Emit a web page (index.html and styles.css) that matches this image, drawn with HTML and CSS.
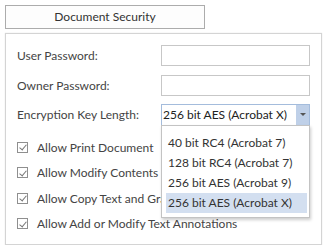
FILE: index.html
```html
<!DOCTYPE html>
<html lang="en">
<head>
  <meta charset="UTF-8" />
  <title>Document Security</title>
  <link rel="stylesheet" href="styles.css">
</head>
<body>
  <div class="tab-button">Document Security</div>

  <div class="panel">
    <div class="field-row">
      <label class="field-label">User Password:</label>
      <input class="text-input" type="password" />
    </div>
    <div class="field-row">
      <label class="field-label">Owner Password:</label>
      <input class="text-input" type="password" />
    </div>
    <div class="field-row">
      <label class="field-label">Encryption Key Length:</label>
      <div class="combo">
        <div class="combo-value">256 bit AES (Acrobat X)</div>
        <div class="combo-button"><span class="arrow"></span></div>
        <ul class="combo-list">
          <li>40 bit RC4 (Acrobat 7)</li>
          <li>128 bit RC4 (Acrobat 7)</li>
          <li>256 bit AES (Acrobat 9)</li>
          <li class="selected">256 bit AES (Acrobat X)</li>
        </ul>
      </div>
    </div>

    <div class="checks">
      <div class="check-row"><span class="checkbox"></span>Allow Print Document</div>
      <div class="check-row"><span class="checkbox"></span>Allow Modify Contents</div>
      <div class="check-row"><span class="checkbox"></span>Allow Copy Text and Graphics</div>
      <div class="check-row"><span class="checkbox"></span>Allow Add or Modify Text Annotations</div>
    </div>
  </div>
</body>
</html>
```

FILE: styles.css
```css
* {
  box-sizing: border-box;
  margin: 0;
  padding: 0;
}

body {
  font-family: Lato, "Open Sans", sans-serif;
  font-size: 12px;
  color: #444;
  background: #fff;
  padding: 5px 0 0 5px;
}

.tab-button {
  width: 200px;
  height: 24px;
  line-height: 21px;
  border: 1px solid #acacac;
  background: #fdfdfd;
  text-align: center;
  color: #333;
}

.panel {
  margin-top: 4px;
  width: 317px;
  height: 212px;
  border: 1px solid #d4d4d4;
  box-shadow: 0 0 1px rgba(0, 0, 0, 0.15);
  padding: 11px 11px 0 11px;
}

.field-row {
  display: flex;
  align-items: center;
  height: 21px;
  margin-bottom: 8.5px;
}

.field-label {
  width: 144px;
}

.text-input {
  width: 149px;
  height: 21px;
  border: 1px solid #c7c7c7;
  background: #fff;
  outline: none;
}

.combo {
  position: relative;
  width: 149px;
  height: 22px;
  display: flex;
  border: 1px solid #a4bcdc;
}

.combo-value {
  flex: 1;
  padding-left: 1px;
  line-height: 19px;
  color: #222;
  background: #fff;
}

.combo-button {
  width: 13px;
  background: #bfd0e8;
  display: flex;
  align-items: center;
  justify-content: center;
}

.arrow {
  width: 0;
  height: 0;
  border-left: 3px solid transparent;
  border-right: 3px solid transparent;
  border-top: 3px solid #555;
}

.combo-list {
  position: absolute;
  top: 20px;
  left: -1px;
  width: 149px;
  list-style: none;
  background: #fff;
  border: 1px solid #c3c3c3;
  box-shadow: 1px 2px 3px rgba(0, 0, 0, 0.2);
  padding: 7px 2px 4px 4px;
  z-index: 2;
}

.combo-list li {
  height: 20px;
  line-height: 20px;
  padding-left: 2px;
  color: #333;
}

.combo-list li.selected {
  background: #d3dff0;
}

.checks {
  padding-top: 1px;
}

.check-row {
  display: flex;
  align-items: center;
  height: 25.5px;
  color: #444;
  white-space: nowrap;
}

.checkbox {
  position: relative;
  width: 11px;
  height: 11px;
  border: 1px solid #8f8f8f;
  margin-right: 9px;
  flex-shrink: 0;
}

.checkbox::after {
  content: '';
  position: absolute;
  left: 3px;
  top: 0.5px;
  width: 3px;
  height: 6px;
  border-right: 1.5px solid #777;
  border-bottom: 1.5px solid #777;
  transform: rotate(40deg);
}
```
